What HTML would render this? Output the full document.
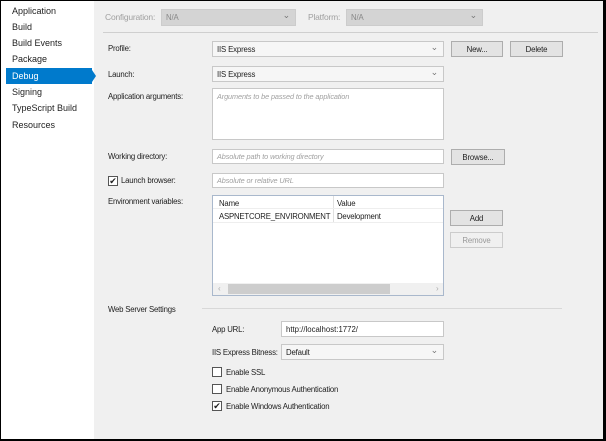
<!DOCTYPE html>
<html><head><meta charset="utf-8"><style>
*{box-sizing:border-box;margin:0;padding:0}
body{width:606px;height:441px;overflow:hidden;background:#000;font-family:"Liberation Sans",sans-serif;font-size:8.5px;color:#1e1e1e;position:relative}
.a{position:absolute}
#side{left:1px;top:1px;width:93px;height:438px;background:#fff}
#main{left:94px;top:1px;width:509px;height:438px;background:#f0f0f0}
.nav{position:absolute;left:12px;font-size:9px;color:#1e1e1e}
.box{position:absolute;background:#fff;border:1px solid #c8c8c8}
.sel{position:absolute;background:#f6f6f6;border:1px solid #c8c8c8;padding:3px 4px;font-size:7.8px;letter-spacing:-0.15px}
.sel:after{content:"⌄";position:absolute;right:5px;top:0px;font-size:9px;color:#777}
.btn{position:absolute;background:#e3e3e3;border:1px solid #adadad;text-align:center;font-size:7.8px;padding-top:3px;letter-spacing:-0.15px}
.ph{color:#a0a0a0;font-style:italic;font-size:7.3px;padding:3px 4px;letter-spacing:-0.1px}
.lbl{position:absolute;font-size:7.8px;letter-spacing:-0.2px;white-space:nowrap}
.cb{position:absolute;width:10px;height:10px;border:1px solid #555;background:#fff;font-size:9px;line-height:8px;text-align:center}
</style></head><body>
<div class="a" id="side"></div>
<div class="a" style="left:6px;top:68px;width:86px;height:16px;background:#007acc"></div>
<div class="a" style="left:92px;top:70px;width:0;height:0;border-top:6px solid transparent;border-bottom:6px solid transparent;border-left:4px solid #007acc;z-index:3"></div>
<div class="nav" style="top:6px">Application</div>
<div class="nav" style="top:22px">Build</div>
<div class="nav" style="top:38px">Build Events</div>
<div class="nav" style="top:54px">Package</div>
<div class="nav" style="top:71px;color:#fff">Debug</div>
<div class="nav" style="top:87px">Signing</div>
<div class="nav" style="top:103px">TypeScript Build</div>
<div class="nav" style="top:120px">Resources</div>
<div class="a" id="main"></div>

<div class="lbl" style="left:105px;top:12px;color:#a0a0a0;font-size:8.5px">Configuration:</div>
<div class="sel" style="left:161px;top:9px;width:135px;height:17px;background:#d4d4d4;border-color:#ccc;color:#888">N/A</div>
<div class="lbl" style="left:308px;top:12px;color:#a0a0a0;font-size:8.5px">Platform:</div>
<div class="sel" style="left:346px;top:9px;width:137px;height:17px;background:#d4d4d4;border-color:#ccc;color:#888">N/A</div>
<div class="a" style="left:103px;top:32px;width:495px;height:1px;background:#cfcfcf"></div>

<div class="lbl" style="left:108px;top:44px">Profile:</div>
<div class="sel" style="left:212px;top:41px;width:232px;height:16px">IIS Express</div>
<div class="btn" style="left:451px;top:41px;width:52px;height:16px">New...</div>
<div class="btn" style="left:510px;top:41px;width:53px;height:16px">Delete</div>

<div class="lbl" style="left:108px;top:70px">Launch:</div>
<div class="sel" style="left:212px;top:66px;width:232px;height:16px">IIS Express</div>

<div class="lbl" style="left:108px;top:92px">Application arguments:</div>
<div class="box ph" style="left:212px;top:88px;width:232px;height:52px">Arguments to be passed to the application</div>

<div class="lbl" style="left:108px;top:152px">Working directory:</div>
<div class="box ph" style="left:212px;top:149px;width:232px;height:15px;padding-top:2px">Absolute path to working directory</div>
<div class="btn" style="left:451px;top:149px;width:54px;height:16px">Browse...</div>

<div class="cb" style="left:108px;top:176px">✔</div>
<div class="lbl" style="left:121px;top:176px">Launch browser:</div>
<div class="box ph" style="left:212px;top:173px;width:232px;height:15px;padding-top:2px">Absolute or relative URL</div>

<div class="lbl" style="left:108px;top:197px">Environment variables:</div>
<div class="box" style="left:212px;top:195px;width:232px;height:101px;border-color:#a9b8cc"></div>
<div class="lbl" style="left:219px;top:199px">Name</div>
<div class="a" style="left:333px;top:196px;width:1px;height:26px;background:#e0e0e0"></div>
<div class="lbl" style="left:337px;top:199px">Value</div>
<div class="a" style="left:213px;top:208px;width:230px;height:1px;background:#eee"></div>
<div class="lbl" style="left:219px;top:212px">ASPNETCORE_ENVIRONMENT</div>
<div class="lbl" style="left:337px;top:212px">Development</div>
<div class="a" style="left:213px;top:222px;width:230px;height:1px;background:#eee"></div>
<div class="a" style="left:213px;top:283px;width:230px;height:12px;background:#f0f0f0"></div>
<div class="a" style="left:228px;top:284px;width:162px;height:10px;background:#cdcdcd"></div>
<div class="lbl" style="left:218px;top:284px;color:#aaa;font-size:8px">‹</div>
<div class="lbl" style="left:436px;top:284px;color:#aaa;font-size:8px">›</div>
<div class="btn" style="left:450px;top:210px;width:53px;height:16px">Add</div>
<div class="btn" style="left:450px;top:232px;width:53px;height:16px;background:#f0f0f0;border-color:#ccc;color:#999">Remove</div>

<div class="lbl" style="left:108px;top:305px">Web Server Settings</div>
<div class="a" style="left:202px;top:308px;width:360px;height:1px;background:#d8d8d8"></div>

<div class="lbl" style="left:212px;top:325px">App URL:</div>
<div class="box" style="left:281px;top:321px;width:163px;height:16px;padding:3px 4px;font-size:7.8px">http://localhost:1772/</div>
<div class="lbl" style="left:212px;top:348px">IIS Express Bitness:</div>
<div class="sel" style="left:281px;top:344px;width:163px;height:16px">Default</div>

<div class="cb" style="left:212px;top:367px"></div>
<div class="lbl" style="left:226px;top:368px">Enable SSL</div>
<div class="cb" style="left:212px;top:384px"></div>
<div class="lbl" style="left:226px;top:385px">Enable Anonymous Authentication</div>
<div class="cb" style="left:212px;top:401px">✔</div>
<div class="lbl" style="left:226px;top:402px">Enable Windows Authentication</div>
</body></html>
